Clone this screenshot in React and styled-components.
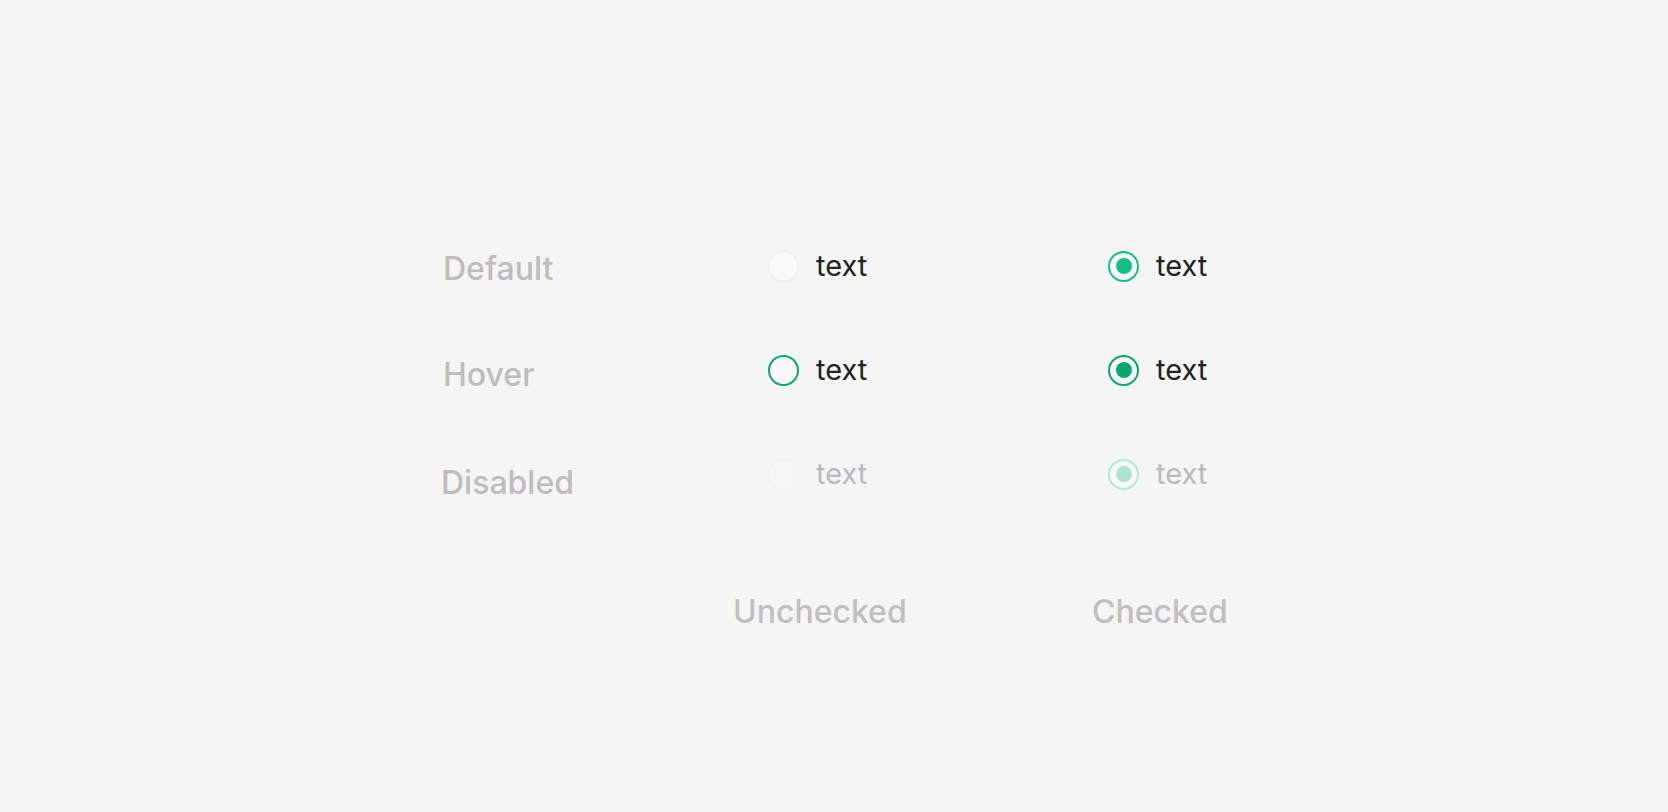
import React from "react";
import styled, { createGlobalStyle } from "styled-components";

const GlobalStyle = createGlobalStyle`
    html, body {
        margin: 0;
        padding: 0;
        background: #f5f5f5;
    }
    body {
        font-family: Inter, "Noto Sans", sans-serif;
    }
`;

const Page = styled.div`
    min-height: 812px;
    background: #f5f5f5;
    padding: 214px 0 0 443px;
    box-sizing: border-box;
`;

const Board = styled.div`
    display: grid;
    grid-template-columns: 325px 340px 200px;
    grid-auto-rows: 104px;
    align-items: center;
`;

const RowLabel = styled.div`
    font-size: 32px;
    font-weight: 500;
    line-height: 40px;
    color: #bdbdbd;
    padding-top: ${(p) => p.$drop * 2}px;
    margin-left: ${(p) => p.$nudge || 0}px;
`;

const Option = styled.label`
    display: flex;
    align-items: center;
    gap: 17px;
    cursor: ${(p) => (p.$disabled ? "default" : "pointer")};
`;

const colors = {
    default: { ring: "#16bf88", dot: "#16bf88" },
    hover: { ring: "#0aa86f", dot: "#0aa86f" },
    disabled: { ring: "#b3e8d6", dot: "#ade4d0" },
};

const Circle = styled.span`
    position: relative;
    box-sizing: border-box;
    width: 31px;
    height: 31px;
    border-radius: 50%;
    flex: none;
    background: ${(p) => (p.$state === "disabled" && !p.$checked ? "#f6f6f6" : "#f9f9f9")};
    border: ${(p) => {
        if (p.$checked) return `2px solid ${colors[p.$state].ring}`;
        if (p.$state === "hover") return `2px solid ${colors.hover.ring}`;
        if (p.$state === "disabled") return "1.5px solid #f1f1f1";
        return "1.5px solid #ebebeb";
    }};

    &::after {
        content: "";
        display: ${(p) => (p.$checked ? "block" : "none")};
        position: absolute;
        left: 50%;
        top: 50%;
        width: 16px;
        height: 16px;
        margin: -8px 0 0 -8px;
        border-radius: 50%;
        background: ${(p) => colors[p.$state].dot};
    }
`;

const OptionText = styled.span`
    font-size: 29px;
    line-height: 32px;
    font-weight: 400;
    color: ${(p) => (p.$disabled ? "#b9b9b9" : "#222222")};
`;

const Footer = styled.div`
    display: grid;
    grid-template-columns: 325px 340px 200px;
    margin-top: 66px;
`;

const ColumnLabel = styled.div`
    grid-column: ${(p) => p.$col};
    margin-left: ${(p) => p.$shift}px;
    font-size: 32px;
    font-weight: 500;
    line-height: 40px;
    color: #bfbfbf;
`;

const Radio = ({ checked, state }) => (
    <Option $disabled={state === "disabled"}>
        <Circle $checked={checked} $state={state} />
        <OptionText $disabled={state === "disabled"}>text</OptionText>
    </Option>
);

const rows = [
    { name: "Default", state: "default", drop: 2.8 },
    { name: "Hover", state: "hover", drop: 4.5 },
    { name: "Disabled", state: "disabled", drop: 9.3, nudge: -2 },
];

const App = () => {
    return (
        <Page>
            <GlobalStyle />
            <Board>
                {rows.map((row) => (
                    <React.Fragment key={row.name}>
                        <RowLabel $drop={row.drop} $nudge={row.nudge}>
                            {row.name}
                        </RowLabel>
                        <Radio checked={false} state={row.state} />
                        <Radio checked={true} state={row.state} />
                    </React.Fragment>
                ))}
            </Board>
            <Footer>
                <ColumnLabel $col={2} $shift={-35}>Unchecked</ColumnLabel>
                <ColumnLabel $col={3} $shift={-16}>Checked</ColumnLabel>
            </Footer>
        </Page>
    );
};

export default App;
